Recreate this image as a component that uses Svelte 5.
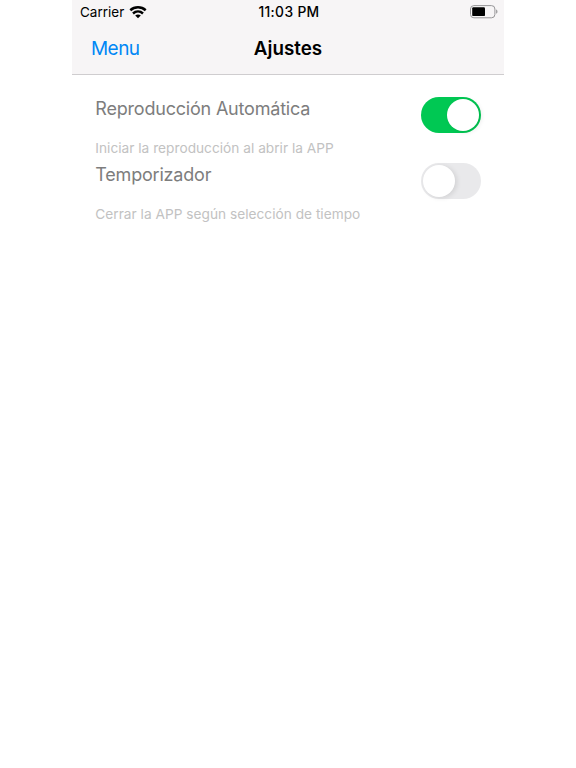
<script>
  const settings = [
    { title: 'Reproducción Automática', note: 'Iniciar la reproducción al abrir la APP', on: true },
    { title: 'Temporizador', note: 'Cerrar la APP según selección de tiempo', on: false }
  ];
</script>

<main>
  <header>
    <div class="status">
      <div class="carrier">
        <span>Carrier</span>
        <svg width="18" height="13" viewBox="0 0 18 13" fill="none" stroke="#000" stroke-width="2.5">
          <path d="M1.3 4.2C5.6.4 12.4.4 16.7 4.2" />
          <path d="M4 7.5c2.9-2.6 7.1-2.6 10 0" />
          <path d="M9 12.3 6.2 9.5c1.6-1.5 4-1.5 5.6 0z" fill="#000" stroke="none" />
        </svg>
      </div>
      <span class="time">11:03 PM</span>
      <svg class="battery" width="28" height="14" viewBox="0 0 28 14">
        <rect x=".5" y=".6" width="24.4" height="12.2" rx="3.4" fill="none" stroke="#969597" />
        <rect x="2.2" y="2.3" width="12.8" height="8.8" rx="1.2" fill="#000" />
        <path d="M26 4.6c2 .6 2 3.6 0 4.2z" fill="#a3a2a4" />
      </svg>
    </div>
    <nav>
      <span class="menu">Menu</span>
      <span class="title">Ajustes</span>
      <span></span>
    </nav>
  </header>
  <section>
    {#each settings as s}
      <div class="row">
        <div class="text">
          <div class="t">{s.title}</div>
          <div class="n">{s.note}</div>
        </div>
        <div class="switch" class:on={s.on}><i></i></div>
      </div>
    {/each}
  </section>
</main>

<style>
  :global(body) { background: #fff; }
  main { width: 432px; height: 768px; margin: 0 auto; font-family: Inter, sans-serif; overflow: hidden; }
  header { height: 75px; background: #f7f5f6; border-bottom: 1px solid #cfcdcf; box-sizing: border-box; }
  .status { height: 24px; display: grid; grid-template-columns: 1fr auto 1fr; align-items: center; padding: 0 6px 0 8px; font-size: 13.5px; }
  .carrier { display: flex; gap: 5px; align-items: center; }
  .time { font-weight: 500; font-size: 13.8px; letter-spacing: .35px; }
  .battery { justify-self: end; }
  nav { height: 49px; display: grid; grid-template-columns: 1fr auto 1fr; align-items: center; padding: 0 19px; font-size: 19px; }
  .menu { color: #0087f5; letter-spacing: -.55px; }
  .title { font-weight: 600; font-size: 18.8px; }
  section { padding: 21px 23.5px 0 23.3px; }
  .row { display: flex; justify-content: space-between; height: 66.3px; }
  .text { display: flex; flex-direction: column; gap: 17px; white-space: nowrap; }
  svg { display: block; }
  .t { font-size: 18px; line-height: 26px; letter-spacing: -.2px; color: #7d7d7d; }
  .n { font-size: 13.7px; line-height: 18px; color: #c2c2c2; letter-spacing: .01px; }
  .switch { width: 59.5px; height: 36px; border-radius: 18px; background: #e9e9eb; box-sizing: border-box; padding: 2px; display: flex; margin-top: 1px; }
  .switch i { width: 32px; height: 32px; border-radius: 50%; background: #fff; box-shadow: 2px 1px 5px rgba(0,0,0,.1); }
  .on { background: #00c853; justify-content: flex-end; }
</style>
